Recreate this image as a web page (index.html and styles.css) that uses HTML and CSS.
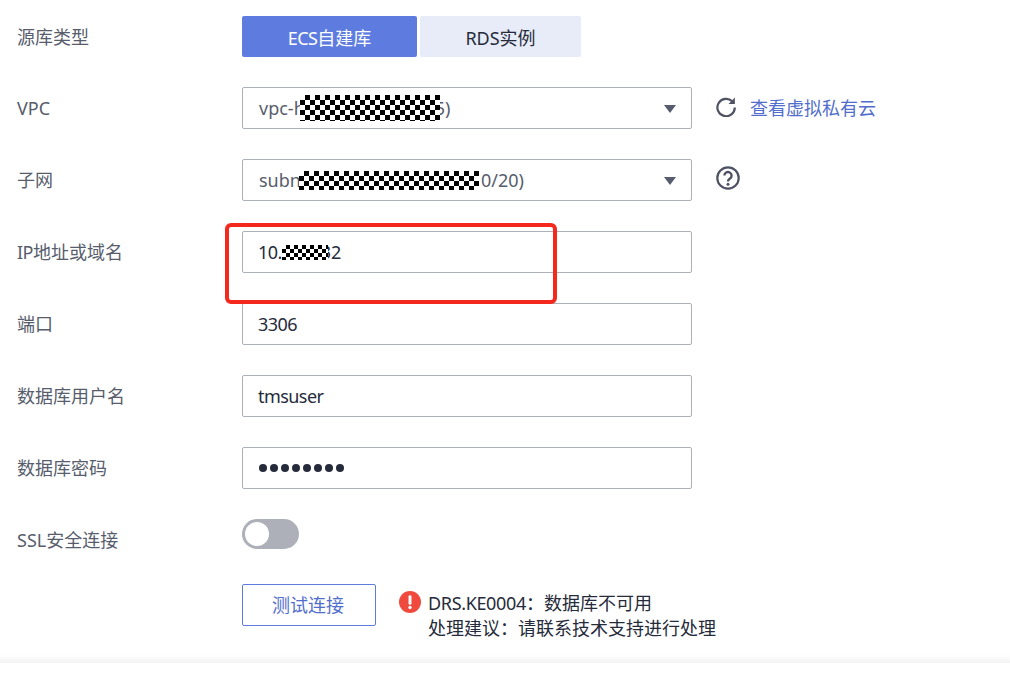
FILE: index.html
```html
<!DOCTYPE html>
<html lang="zh-CN">
<head>
<meta charset="utf-8">
<title>源库信息</title>
<link rel="stylesheet" href="styles.css">
</head>
<body>
<main class="page">
  <form class="form">
    <div class="row row-seg">
      <span class="label">源库类型</span>
      <div class="segmented">
        <button type="button" class="seg seg-on"><span class="lat">ECS</span>自建库</button>
        <button type="button" class="seg">RDS实例</button>
      </div>
    </div>
    <div class="row">
      <span class="label">VPC</span>
      <div class="field select"><span class="value">vpc-h</span><span class="mask mask-vpc"></span><span class="value">5)</span><i class="caret"></i></div>
      <svg class="icon-refresh" viewBox="0 0 20 20" width="20" height="20" aria-hidden="true"><path d="M16.200 4.300A8.700 8.700 0 1 0 18.800 10.500" fill="none" stroke="#4f5263" stroke-width="2.200"/><path d="M18.900 0.600v6.400h-6.400z" fill="#4f5263"/></svg>
      <a class="link">查看虚拟私有云</a>
    </div>
    <div class="row">
      <span class="label">子网</span>
      <div class="field select"><span class="value">subn</span><span class="mask mask-subnet"></span><span class="value">0/20)</span><i class="caret"></i></div>
      <svg class="icon-help" viewBox="0 0 24 24" width="24" height="24" aria-hidden="true"><circle cx="12" cy="12" r="10.700" fill="none" stroke="#4f5263" stroke-width="2.200"/><path d="M8.400 9.600a3.600 3.600 0 1 1 5.600 3c-1.400.9-2 1.500-2 2.900" fill="none" stroke="#4f5263" stroke-width="2.400"/><circle cx="12" cy="18.300" r="1.500" fill="#4f5263"/></svg>
    </div>
    <div class="row">
      <span class="label"><span class="lat">IP</span>地址或域名</span>
      <div class="field"><span class="value lat">10.</span><span class="mask mask-ip"></span><span class="value">32</span></div>
    </div>
    <div class="row">
      <span class="label">端口</span>
      <div class="field"><span class="value lat">3306</span></div>
    </div>
    <div class="row">
      <span class="label">数据库用户名</span>
      <div class="field"><span class="value lat">tmsuser</span></div>
    </div>
    <div class="row">
      <span class="label">数据库密码</span>
      <div class="field dots"><i></i><i></i><i></i><i></i><i></i><i></i><i></i><i></i></div>
    </div>
    <div class="row row-switch">
      <span class="label">SSL安全连接</span>
      <span class="switch"><i class="knob"></i></span>
    </div>
    <div class="row row-test">
      <span class="label"></span>
      <button type="button" class="test-btn">测试连接</button>
      <svg class="icon-error" viewBox="0 0 24 24" width="22" height="22" aria-hidden="true"><circle cx="12" cy="12" r="12" fill="#f0493e"/><rect x="10.400" y="4.500" width="3.200" height="10.500" rx="1.500" fill="#fff"/><circle cx="12" cy="18" r="1.800" fill="#fff"/></svg>
      <div class="message">
        <div class="code-line"><span>DRS.KE0004</span>：数据库不可用</div>
        <div>处理建议：请联系技术支持进行处理</div>
      </div>
    </div>
  </form>
  <div class="footer-strip"></div>
  <div class="annotation"></div>
</main>
</body>
</html>
```
FILE: styles.css
```css
* { box-sizing: border-box; }
html, body { margin: 0; background: #fff; }
body {
  font-family: "Noto Sans", "Noto Sans CJK SC", sans-serif;
  font-size: 18px;
  color: #252b3a;
}
.page { position: relative; width: 1010px; height: 675px; overflow: hidden; }
.form { display: flex; flex-direction: column; gap: 30px; padding: 16px 0 0 17px; height: 655px; }
.row { display: flex; align-items: flex-start; height: 42px; }
.row-seg { height: 41px; }
.row-switch { height: 35px; }
.label { width: 225px; flex: none; line-height: 42px; color: #575d6c; }
.lat { letter-spacing: -0.55px; }
.segmented { display: flex; gap: 3px; }
.seg {
  height: 41px; border: 0; border-radius: 2px; padding: 0;
  font: inherit; background: #e8ebf8; color: #252b3a; width: 161px;
}
.seg-on { width: 175px; background: #5e7ce0; color: #fff; }
.field {
  position: relative; display: flex; align-items: center;
  width: 450px; height: 42px; padding: 0 15px;
  border: 1px solid #adb0b8; border-radius: 2px; background: #fff;
  white-space: nowrap; color: #252b3a;
}
.select { padding-left: 16px; }
.select .value { color: #575d6c; }
.mask {
  display: block; flex: none; position: relative; z-index: 1;
  background: repeating-conic-gradient(#000 0 25%, #fff 0 50%) 0 0 / 10px 10px;
}
.mask-vpc { width: 140px; height: 26px; margin: 0 -5px 0 -5px; }
.mask-subnet { width: 180px; height: 19px; margin: 0 2px 0 -2px; }
.mask-ip { width: 46px; height: 15px; margin: 0 -7px 0 0; background-size: 8px 8px; }
.caret {
  position: absolute; right: 15px; top: 17px;
  width: 0; height: 0;
  border-left: 6px solid transparent; border-right: 6px solid transparent;
  border-top: 8px solid #575d6c;
}
.icon-refresh { margin: 10px 0 0 24px; flex: none; }
.icon-help { margin: 7px 0 0 24px; flex: none; }
.link { margin: 0 0 0 14px; line-height: 42px; color: #526ecc; }
.dots { gap: 3px; padding-left: 16px; }
.dots i { width: 8px; height: 8px; border-radius: 50%; background: #252b3a; }
.switch { display: block; width: 57px; height: 30px; border-radius: 15px; background: #adb0b8; padding: 3px; }
.knob { display: block; width: 24px; height: 24px; border-radius: 50%; background: #fff; }
.row-test { height: 48px; }
.test-btn {
  width: 134px; height: 42px; flex: none; padding: 0 2px 2px 0;
  border: 1px solid #5e7ce0; border-radius: 2px; background: #fff;
  font: inherit; color: #526ecc;
}
.icon-error { margin: 7px 0 0 23px; flex: none; }
.message { margin: 7px 0 0 7px; line-height: 25px; color: #252b3a; white-space: nowrap; }
.code-line span { letter-spacing: -0.35px; }
.footer-strip { height: 8px; background: linear-gradient(#fff, #f3f3f4); }
.annotation {
  position: absolute; left: 225px; top: 223px; width: 332px; height: 81px;
  border: 4px solid #f5281e; border-radius: 6px; pointer-events: none;
}
```
